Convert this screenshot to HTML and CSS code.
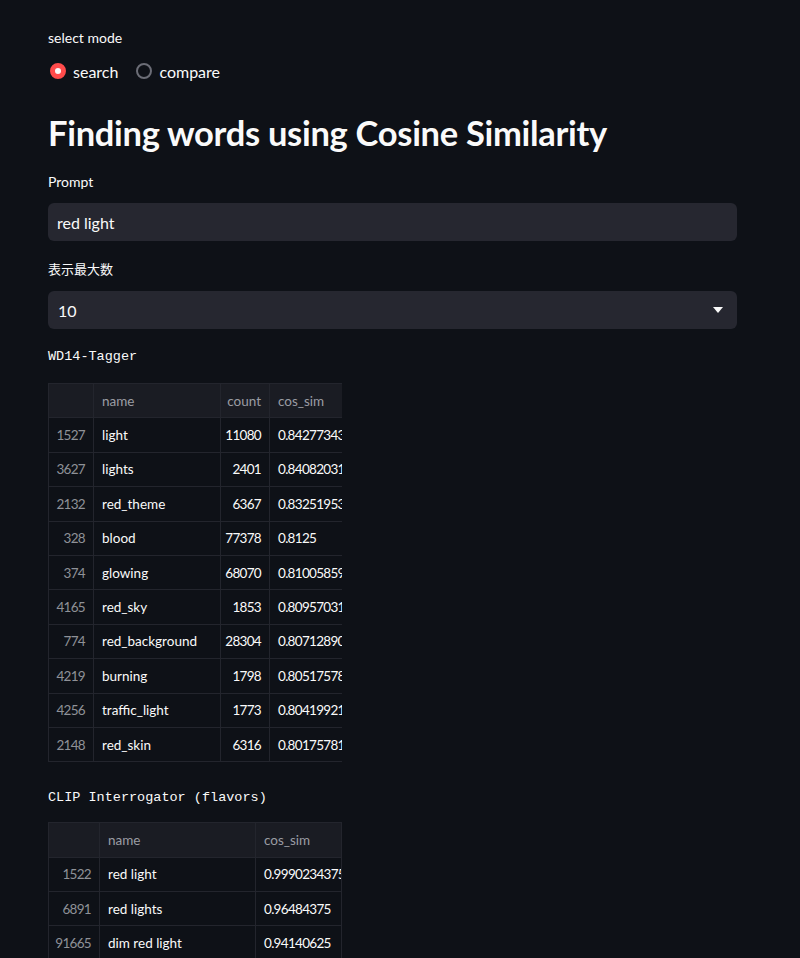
FILE: index.html
```html
<!DOCTYPE html>
<html lang="en">
<head>
<meta charset="utf-8">
<title>Finding words using Cosine Similarity</title>
<link rel="stylesheet" href="styles.css">
</head>
<body>
<main class="main">
  <div class="label label-mode">select mode</div>
  <div class="radio-group">
    <label class="radio"><span class="dot dot-on"></span><span>search</span></label>
    <label class="radio"><span class="dot"></span><span>compare</span></label>
  </div>

  <h1 class="title">Finding words using Cosine Similarity</h1>

  <div class="label">Prompt</div>
  <div class="field">red light</div>

  <div class="label label-cjk">表示最大数</div>
  <div class="field select">
    <span>10</span>
    <svg class="caret" width="10" height="6" viewBox="0 0 10 6"><path d="M0 0h10L5 6z" fill="#fafafa"/></svg>
  </div>

  <div class="code-title">WD14-Tagger</div>
  <div class="table-wrap">
    <div class="grid grid-a">
      <div class="cell head"></div><div class="cell head">name</div><div class="cell head num">count</div><div class="cell head">cos_sim</div>
      <div class="cell idx">1527</div><div class="cell">light</div><div class="cell num">11080</div><div class="cell flt">0.84277343</div>
      <div class="cell idx">3627</div><div class="cell">lights</div><div class="cell num">2401</div><div class="cell flt">0.84082031</div>
      <div class="cell idx">2132</div><div class="cell">red_theme</div><div class="cell num">6367</div><div class="cell flt">0.83251953</div>
      <div class="cell idx">328</div><div class="cell">blood</div><div class="cell num">77378</div><div class="cell flt">0.8125</div>
      <div class="cell idx">374</div><div class="cell">glowing</div><div class="cell num">68070</div><div class="cell flt">0.81005859</div>
      <div class="cell idx">4165</div><div class="cell">red_sky</div><div class="cell num">1853</div><div class="cell flt">0.80957031</div>
      <div class="cell idx">774</div><div class="cell">red_background</div><div class="cell num">28304</div><div class="cell flt">0.80712890</div>
      <div class="cell idx">4219</div><div class="cell">burning</div><div class="cell num">1798</div><div class="cell flt">0.80517578</div>
      <div class="cell idx">4256</div><div class="cell">traffic_light</div><div class="cell num">1773</div><div class="cell flt">0.80419921</div>
      <div class="cell idx">2148</div><div class="cell">red_skin</div><div class="cell num">6316</div><div class="cell flt">0.80175781</div>
    </div>
  </div>

  <div class="code-title code-title-2">CLIP Interrogator (flavors)</div>
  <div class="table-wrap">
    <div class="grid grid-b">
      <div class="cell head"></div><div class="cell head">name</div><div class="cell head">cos_sim</div>
      <div class="cell idx">1522</div><div class="cell">red light</div><div class="cell flt">0.9990234375</div>
      <div class="cell idx">6891</div><div class="cell">red lights</div><div class="cell flt">0.96484375</div>
      <div class="cell idx">91665</div><div class="cell">dim red light</div><div class="cell flt">0.94140625</div>
      <div class="cell idx">2040</div><div class="cell">red glow</div><div class="cell flt">0.93017578</div>
    </div>
  </div>
</main>
</body>
</html>
```

FILE: styles.css
```css
html, body {
  margin: 0;
  padding: 0;
  background: #0e1117;
  color: #fafafa;
  font-family: Lato, "Noto Sans CJK JP", sans-serif;
  overflow: hidden;
}

.main {
  width: 689px;
  padding: 28px 0 0 48px;
}

.label {
  font-size: 14px;
  line-height: 20px;
  height: 20px;
  margin-bottom: 11px;
}

.label-cjk {
  font-family: "Noto Sans CJK JP", sans-serif;
  font-size: 13px;
  margin-bottom: 12px;
}

.radio-group {
  display: flex;
  gap: 16px;
  height: 24px;
  align-items: center;
}

.radio {
  display: flex;
  align-items: center;
  gap: 7px;
  font-size: 16px;
}

.dot {
  width: 16px;
  height: 16px;
  border-radius: 50%;
  box-sizing: border-box;
  border: 2px solid #6b6d76;
  margin-left: 2px;
}

.dot-on {
  border: 5px solid #ff4b4b;
  background: #fafafa;
}

.title {
  font-size: 34.5px;
  font-weight: 700;
  line-height: 46px;
  margin: 27px 0 16px 0;
  letter-spacing: -0.3px;
}

.field {
  height: 38px;
  box-sizing: border-box;
  background: #262730;
  border-radius: 6px;
  padding: 0 9px;
  display: flex;
  align-items: center;
  font-size: 16px;
  margin-bottom: 18px;
}

.select {
  justify-content: space-between;
  padding: 0 14px 0 10px;
  margin-bottom: 18px;
}

.code-title {
  font-family: "Liberation Mono", "DejaVu Sans Mono", monospace;
  font-size: 13.5px;
  line-height: 20px;
  height: 20px;
  margin-bottom: 16px;
}

.code-title-2 {
  margin-top: 26px;
  margin-bottom: 14px;
}

.table-wrap {
  width: 294px;
  overflow: hidden;
}

.grid {
  display: grid;
  border-left: 1px solid #23252d;
  border-top: 1px solid #23252d;
  width: max-content;
}

.grid-a {
  grid-template-columns: 45px 127px 49px 90px;
  grid-auto-rows: 34.4px;
}

.grid-b {
  grid-template-columns: 51px 156px 86px;
  grid-auto-rows: 34.4px;
}

.cell {
  box-sizing: border-box;
  border-right: 1px solid #23252d;
  border-bottom: 1px solid #23252d;
  font-size: 13.5px;
  display: flex;
  align-items: center;
  padding: 0 8px;
  white-space: nowrap;
  overflow: hidden;
  color: #fafafa;
}

.head {
  background: #1a1c23;
  color: #9a9ca3;
}

.idx {
  justify-content: flex-end;
  color: #8f9197;
  letter-spacing: -0.7px;
}

.num {
  justify-content: flex-end;
  letter-spacing: -0.7px;
}

.flt {
  letter-spacing: -0.7px;
}

.head.num {
  letter-spacing: 0;
}
```
